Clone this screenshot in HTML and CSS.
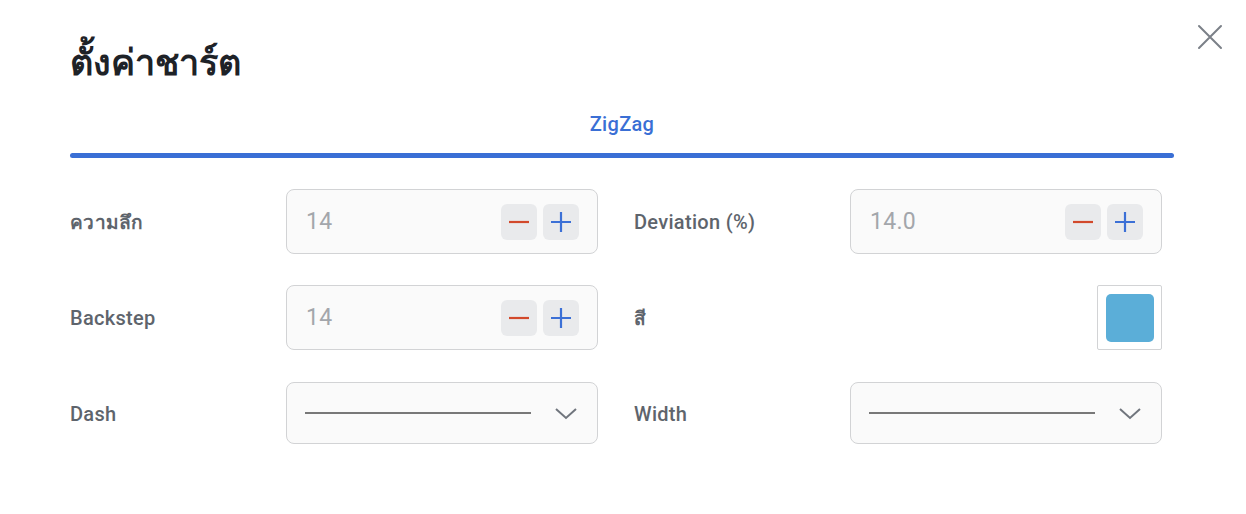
FILE: index.html
```html
<!DOCTYPE html>
<html lang="th">
<head>
<meta charset="utf-8">
<title>ตั้งค่าชาร์ต</title>
<link rel="stylesheet" href="styles.css">
</head>
<body>
<div class="dialog">
  <button class="close" aria-label="close">
    <svg width="28" height="28" viewBox="0 0 28 28"><path d="M3 3 L25 25 M25 3 L3 25" stroke="#7b8088" stroke-width="2" fill="none" stroke-linecap="round"/></svg>
  </button>
  <h1 class="title">ตั้งค่าชาร์ต</h1>
  <div class="tabs">
    <div class="tab">ZigZag</div>
    <div class="tab-bar"></div>
  </div>
  <div class="rows">
    <div class="row">
      <div class="field">
        <div class="label thai">ความลึก</div>
        <div class="control stepper">
          <span class="value">14</span>
          <span class="btn minus"><svg width="22" height="22" viewBox="0 0 22 22"><path d="M1 11 H21" stroke="#d2492b" stroke-width="2.2"/></svg></span>
          <span class="btn plus"><svg width="22" height="22" viewBox="0 0 22 22"><path d="M1 11 H21 M11 1 V21" stroke="#3c70d6" stroke-width="2.2"/></svg></span>
        </div>
      </div>
      <div class="field">
        <div class="label">Deviation (%)</div>
        <div class="control stepper">
          <span class="value">14.0</span>
          <span class="btn minus"><svg width="22" height="22" viewBox="0 0 22 22"><path d="M1 11 H21" stroke="#d2492b" stroke-width="2.2"/></svg></span>
          <span class="btn plus"><svg width="22" height="22" viewBox="0 0 22 22"><path d="M1 11 H21 M11 1 V21" stroke="#3c70d6" stroke-width="2.2"/></svg></span>
        </div>
      </div>
    </div>
    <div class="row">
      <div class="field">
        <div class="label">Backstep</div>
        <div class="control stepper">
          <span class="value">14</span>
          <span class="btn minus"><svg width="22" height="22" viewBox="0 0 22 22"><path d="M1 11 H21" stroke="#d2492b" stroke-width="2.2"/></svg></span>
          <span class="btn plus"><svg width="22" height="22" viewBox="0 0 22 22"><path d="M1 11 H21 M11 1 V21" stroke="#3c70d6" stroke-width="2.2"/></svg></span>
        </div>
      </div>
      <div class="field">
        <div class="label thai">สี</div>
        <div class="control-plain">
          <div class="swatch"><div class="swatch-inner"></div></div>
        </div>
      </div>
    </div>
    <div class="row short">
      <div class="field">
        <div class="label">Dash</div>
        <div class="control select">
          <span class="line"></span>
          <svg class="chev" width="24" height="14" viewBox="0 0 24 14"><path d="M2 3 L12 12 L22 3" stroke="#70757d" stroke-width="2" fill="none"/></svg>
        </div>
      </div>
      <div class="field">
        <div class="label">Width</div>
        <div class="control select">
          <span class="line"></span>
          <svg class="chev" width="24" height="14" viewBox="0 0 24 14"><path d="M2 3 L12 12 L22 3" stroke="#70757d" stroke-width="2" fill="none"/></svg>
        </div>
      </div>
    </div>
  </div>
</div>
</body>
</html>
```
FILE: styles.css
```css
* { box-sizing: border-box; }
html, body { margin: 0; padding: 0; background: #ffffff; }
body {
  font-family: Roboto, "Noto Sans", "DejaVu Sans", sans-serif;
  width: 1246px;
  height: 514px;
  overflow: hidden;
}
.dialog {
  position: relative;
  padding: 38px 72px 0 70px;
}
.close {
  position: absolute;
  top: 23px;
  right: 22px;
  width: 28px;
  height: 28px;
  padding: 0;
  border: 0;
  background: transparent;
  display: flex;
}
.title {
  margin: 0;
  font-size: 36px;
  line-height: 50px;
  font-weight: 700;
  color: #1e2227;
}
.tabs {
  margin-top: 24px;
  display: flex;
  flex-direction: column;
  align-items: center;
}
.tab {
  font-size: 20px;
  font-weight: 500;
  letter-spacing: 0.3px;
  color: #3a6fd5;
  line-height: 24px;
}
.tab-bar {
  margin-top: 17px;
  width: 100%;
  height: 5px;
  border-radius: 3px;
  background: #3a6fd5;
}
.rows {
  margin-top: 31px;
  display: flex;
  flex-direction: column;
  gap: 31px;
}
.row {
  display: flex;
  gap: 36px;
  height: 65px;
}
.row.short { height: 62px; margin-top: 1px; }
.field {
  display: flex;
  align-items: center;
  width: 528px;
}
.label {
  width: 216px;
  flex: none;
  font-size: 20px;
  font-weight: 500;
  letter-spacing: 0.3px;
  color: #5e646c;
  padding-top: 1px;
}
.label.thai {
  font-weight: 600;
  font-size: 19px;
}
.control {
  width: 312px;
  height: 100%;
  border: 1px solid #d2d3d5;
  border-radius: 8px;
  background: #fafafa;
  display: flex;
  align-items: center;
}
.stepper {
  padding: 0 18px 0 19px;
  gap: 6px;
}
.value {
  flex: 1;
  font-size: 23px;
  letter-spacing: 0.3px;
  color: #a3a6ab;
}
.btn {
  width: 36px;
  height: 36px;
  border-radius: 6px;
  background: #e9eaec;
  display: flex;
  align-items: center;
  justify-content: center;
}
.control-plain {
  width: 312px;
  height: 100%;
  display: flex;
  justify-content: flex-end;
}
.swatch {
  width: 65px;
  height: 65px;
  border: 1px solid #d2d3d5;
  border-radius: 2px;
  background: #ffffff;
  display: flex;
  align-items: center;
  justify-content: center;
}
.swatch-inner {
  width: 48px;
  height: 48px;
  border-radius: 5px;
  background: #5baed8;
}
.select {
  padding: 0 19px 0 18px;
}
.line {
  width: 226px;
  height: 2px;
  background: #787878;
}
.chev {
  margin-left: auto;
}
```
